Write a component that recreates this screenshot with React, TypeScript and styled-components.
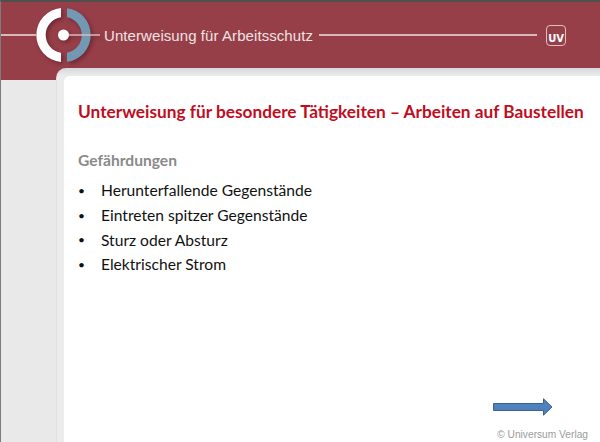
import React from "react";
import styled, { createGlobalStyle } from "styled-components";

const GlobalStyle = createGlobalStyle`
  html, body {
    margin: 0;
    padding: 0;
    background: #fff;
  }
`;

const items = [
  "Herunterfallende Gegenstände",
  "Eintreten spitzer Gegenstände",
  "Sturz oder Absturz",
  "Elektrischer Strom",
];

export default function App() {
  return (
    <Page>
      <GlobalStyle />
      <Header>
        <LeadRule />
        <Logo width="64" height="58" viewBox="0 0 64 58">
          <path d="M25 2.1 A27 27 0 0 0 25 55.9 V46.8 A18 18 0 0 1 25 11.2 Z" fill="#fff" />
          <path d="M31 2.2 A27 27 0 0 1 31 55.8 V46.7 A18 18 0 0 0 31 11.3 Z" fill="#7398b4" />
          <line x1="28" y1="29" x2="64" y2="29" stroke="#d9b8bc" strokeWidth="1.5" />
          <circle cx="27.5" cy="29" r="5.5" fill="#fff" />
        </Logo>
        <HeaderTitle>Unterweisung für Arbeitsschutz</HeaderTitle>
        <TrailRule />
        <Badge>UV</Badge>
      </Header>
      <Body>
        <Side />
        <Card>
          <Inner>
            <Title>Unterweisung für besondere Tätigkeiten – Arbeiten auf Baustellen</Title>
            <SubTitle>Gefährdungen</SubTitle>
            <List>
              {items.map((item) => (
                <Item key={item}>
                  <Dot>•</Dot>
                  {item}
                </Item>
              ))}
            </List>
            <Footer>
              <Arrow width="60" height="18" viewBox="0 0 60 18">
                <path
                  d="M0.5 5.5 H50.5 V0.8 L59 9 L50.5 17.2 V12.5 H0.5 Z"
                  fill="#4f81bd"
                  stroke="#3a6291"
                  strokeWidth="1"
                />
              </Arrow>
              <Copyright>© Universum Verlag</Copyright>
            </Footer>
          </Inner>
        </Card>
      </Body>
    </Page>
  );
}

const Page = styled.div`
  width: 600px;
  height: 442px;
  display: flex;
  flex-direction: column;
  overflow: hidden;
  box-sizing: border-box;
  border-top: 2px solid #4f4f4f;
  border-left: 1px solid #7c7c7c;
  background: #e9e9e9;
`;

const Header = styled.header`
  height: 66px;
  flex: none;
  display: flex;
  align-items: center;
  background: #973f49;
`;

const LeadRule = styled.div`
  width: 35px;
  height: 1.5px;
  background: #d9b8bc;
`;

const Logo = styled.svg`
  flex: none;
  display: block;
  filter: drop-shadow(2px 2px 2px rgba(60, 10, 15, 0.45));
`;

const HeaderTitle = styled.span`
  width: 209px;
  margin-left: 4px;
  font-family: "Liberation Sans", Arial, sans-serif;
  font-size: 15px;
  letter-spacing: 0.005em;
  color: #f0e2e3;
  white-space: nowrap;
`;

const TrailRule = styled.div`
  width: 218px;
  height: 1.5px;
  margin-left: 6px;
  background: #d9b8bc;
`;

const Badge = styled.div`
  width: 20px;
  height: 21px;
  margin-left: 9px;
  box-sizing: border-box;
  border: 1px solid #dcc0c3;
  border-radius: 4px;
  display: flex;
  align-items: flex-end;
  justify-content: center;
  font-family: "DejaVu Sans", sans-serif;
  font-size: 10px;
  line-height: 13px;
  font-weight: 700;
  letter-spacing: -0.03em;
  color: #fff;
`;

const Body = styled.div`
  flex: 1;
  display: flex;
  min-height: 0;
  background: #973f49;
`;

const Side = styled.div`
  width: 55px;
  flex: none;
  background: #e9e9e9;
  margin-top: 12px;
`;

const Card = styled.div`
  flex: 1;
  display: flex;
  padding: 8px 0 0 7px;
  background: linear-gradient(#d8d8d8, #ececec 8px);
  border-top-left-radius: 10px;
  border-left: 1px solid #e0e0e0;
`;

const Inner = styled.main`
  flex: 1;
  display: flex;
  flex-direction: column;
  background: #fff;
  border-top-left-radius: 6px;
  padding: 24px 0 0 14px;
  font-family: Lato, "Noto Sans", sans-serif;
`;

const Title = styled.h1`
  margin: 0;
  font-size: 17.25px;
  line-height: 24px;
  font-weight: 700;
  color: #c00d1e;
  white-space: nowrap;
`;

const SubTitle = styled.h2`
  margin: 25px 0 0;
  font-size: 15.6px;
  line-height: 22px;
  font-weight: 700;
  color: #8a8a8a;
`;

const List = styled.ul`
  list-style: none;
  margin: 7px 0 0;
  padding: 0;
  display: flex;
  flex-direction: column;
`;

const Item = styled.li`
  display: flex;
  height: 24.7px;
  align-items: center;
  font-size: 15.6px;
  color: #111;
  white-space: nowrap;
`;

const Dot = styled.span`
  width: 23px;
  flex: none;
  font-size: 12px;
`;

const Footer = styled.footer`
  margin-top: auto;
  display: flex;
  flex-direction: column;
  align-items: flex-end;
  padding: 0 12px 1px 0;
`;

const Arrow = styled.svg`
  display: block;
  margin: 0 35px 12px 0;
`;

const Copyright = styled.span`
  font-family: "Liberation Sans", Arial, sans-serif;
  font-size: 10.2px;
  line-height: 13px;
  color: #9b9b9b;
  white-space: nowrap;
`;
